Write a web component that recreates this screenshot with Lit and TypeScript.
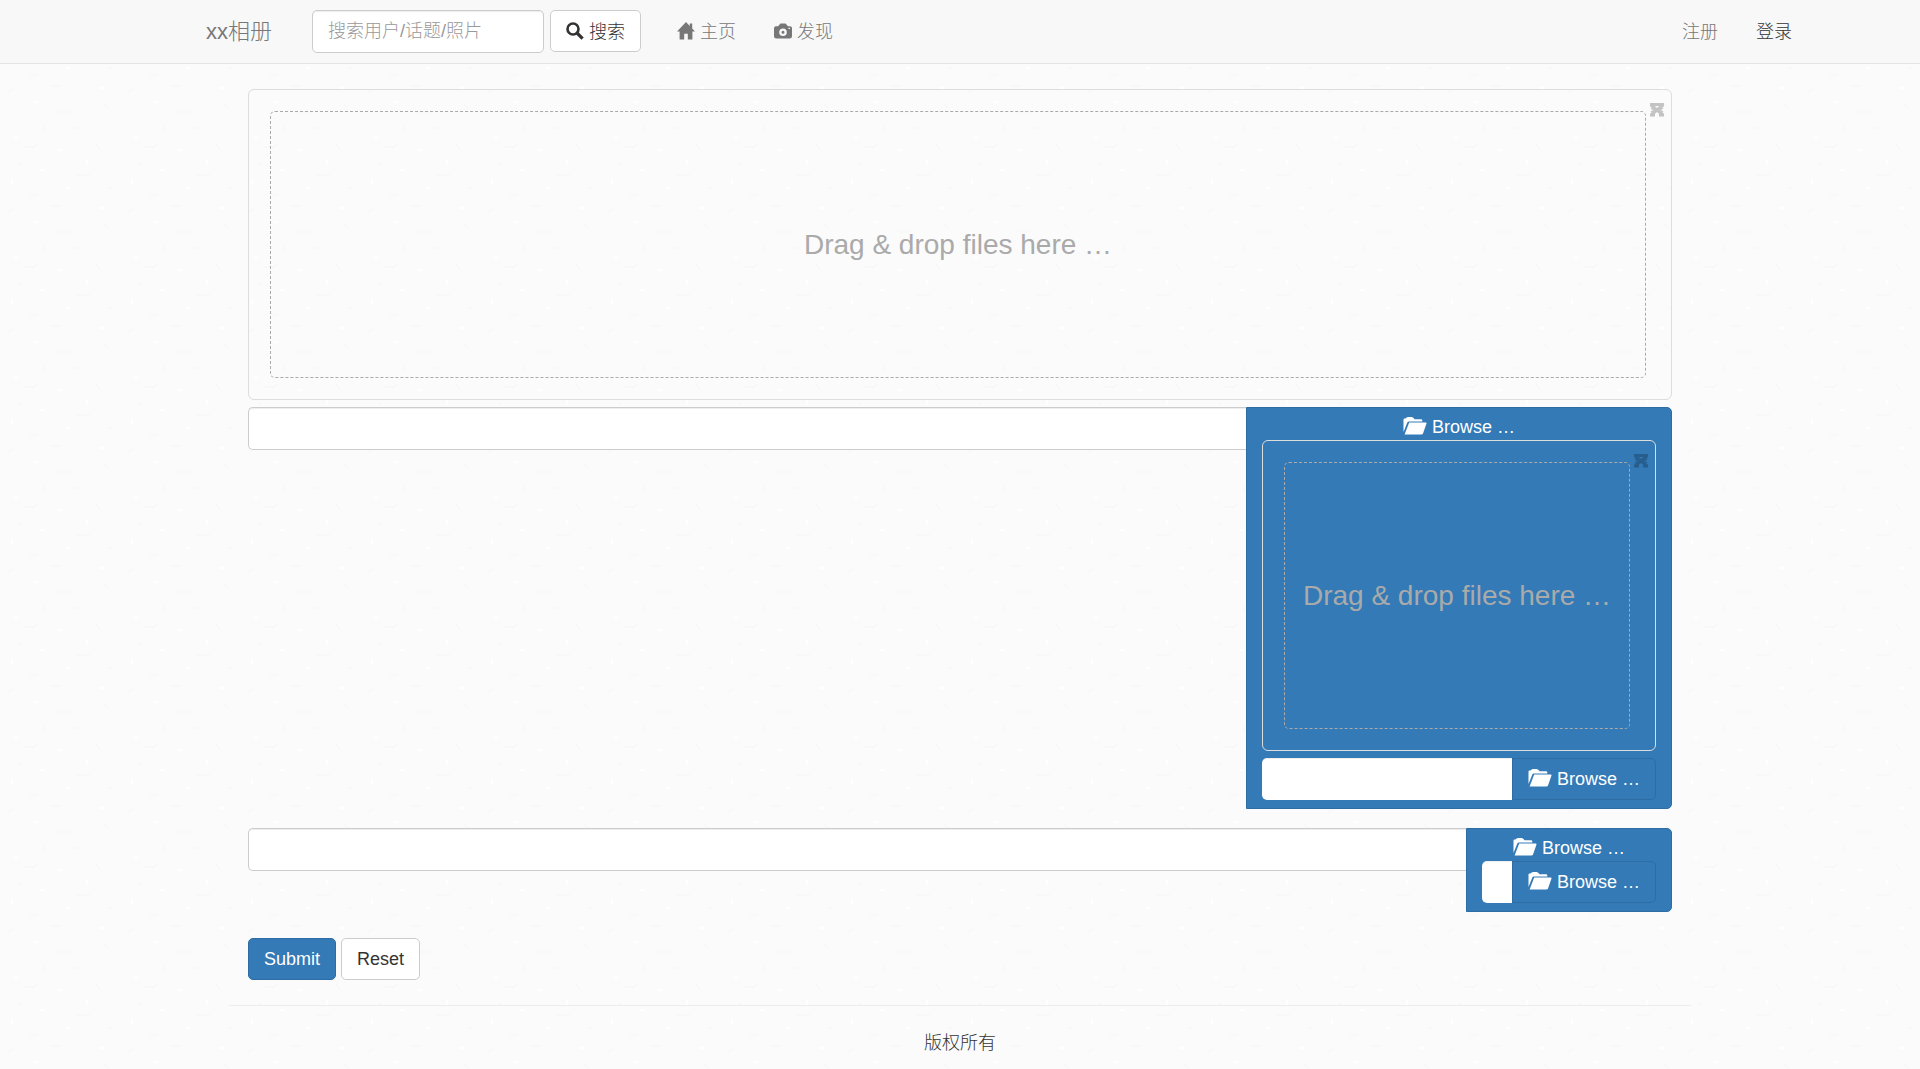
import { LitElement, html, css, svg } from "lit";
import { customElement } from "lit/decorators.js";

const paths: Record<string, [string, unknown]> = {
  search: ["0 0 18 18", svg`<circle cx="7" cy="7" r="5.5" fill="none" stroke="currentColor" stroke-width="2.6"/><path d="M11 11l5.6 5.6" stroke="currentColor" stroke-width="3.2"/>`],
  home: ["0 0 18 18", svg`<path d="M9 0L0 9.400h2.600V17.500h4.600V11.800h3.600v5.700h4.600V9.400h2.600L15.200 6.400V1.400h-2.400v2.500z"/>`],
  camera: ["0 0 18 18", svg`<path fill-rule="evenodd" d="M6.500 1.400h5l2.500 2.800H16Q18 4.200 18 6v8.200Q18 16.500 15.700 16.500H2.300Q0 16.500 0 14.200V6.200Q0 4.200 2 4.200h2zM9 6.400a3.800 3.800 0 1 0 0 7.600A3.800 3.800 0 0 0 9 6.400zM9 8.700a1.500 1.500 0 1 1 0 3a1.500 1.500 0 0 1 0-3zM14.500 5.800v1.200h1.500V5.800z"/>`],
  folder: ["0 0 24 18", svg`<path d="M.5 15V2.500Q.5 1.500 1.500 1.500h1Q3.500 0 5 0h3.500Q10 0 11 1.500l.5.700h6.500q1.300 0 1.300 1.300v.9H6Q4.800 4.400 4.300 5.600z"/><path d="M6.200 5.400H22.600q1.200 0 .9 1.200L20.200 16q-.4 1.500-2 1.500H1.600z"/>`],
};
const icon = (name: string) => html`<svg class="icon ${name}" viewBox=${paths[name][0]} fill="currentColor" aria-hidden="true">${paths[name][1]}</svg>`;

@customElement("app-root")
export class AppRoot extends LitElement {
  static styles = css`
    :host {
      display: block;
      position: relative;
      min-height: 100vh;
      background: #fbfbfb;
      color: #333;
      font: 18px/25px "Liberation Sans", "Noto Sans CJK SC", sans-serif;
      font-weight: 300;
    }
    * { box-sizing: border-box; }
    .texture { position: absolute; inset: 0; width: 100%; height: 100%; }
    .icon { width: 18px; height: 18px; margin-bottom: 3px; flex: none; }
    .icon.folder { width: 24px; }
    .navbar {
      position: relative;
      display: flex;
      align-items: center;
      height: 64px;
      padding: 0 128px 0 206px;
      background: #f8f8f8;
      border-bottom: 1px solid #e4e4e4;
      color: #777;
    }
    a { color: inherit; text-decoration: none; display: flex; align-items: center; gap: 5px; }
    .brand { font-size: 22px; margin-right: 40px; }
    .search { display: flex; align-items: flex-start; gap: 6px; }
    .field {
      min-width: 0;
      height: 43px;
      padding: 8px 15px;
      border: 1px solid #ccc;
      border-radius: 5px;
      background: #fff;
      box-shadow: inset 0 1px 1px rgba(0, 0, 0, 0.075);
      font: inherit;
      color: #555;
      outline: 0;
    }
    .field::placeholder { color: #999; opacity: 1; }
    .search .field { width: 232px; }
    .button {
      display: flex;
      align-items: center;
      justify-content: center;
      gap: 5px;
      height: 42px;
      padding: 0 15px;
      border: 1px solid #ccc;
      border-radius: 5px;
      background: #fff;
      font: inherit;
      color: #333;
      cursor: pointer;
    }
    .search .button { padding-top: 2px; }
    .links, .account { display: flex; gap: 38px; padding-top: 2px; }
    .links { margin-left: 36px; }
    .account { margin-left: auto; }
    .current { color: #333; }
    .page { position: relative; max-width: 1462px; margin: 0 auto; }
    form { display: flex; flex-direction: column; padding: 25px 19px; }
    .preview {
      position: relative;
      padding: 21px 25px 21px 21px;
      border: 1px solid #ddd;
      border-radius: 6px;
      margin-bottom: 7px;
    }
    .zone {
      display: flex;
      align-items: center;
      justify-content: center;
      height: 267px;
      border: 1px dashed #aaa;
      border-radius: 5px;
      color: #aaa;
      font-size: 28px;
      line-height: 40px;
      white-space: nowrap;
    }
    .close {
      position: absolute;
      top: 12px;
      right: 6px;
      width: 16px;
      height: 16px;
      padding: 0;
      border: 0;
      background: none;
      color: #000;
      opacity: 0.22;
      cursor: pointer;
    }
    .close svg { display: block; width: 16px; height: 16px; }
    .group { display: flex; align-items: flex-start; }
    .group .field { flex: 1 1 0; width: 0; border-right: 0; border-radius: 5px 0 0 5px; }
    .upload {
      padding: 7px 15px 8px;
      background: #337ab7;
      border: 1px solid #2e6da4;
      border-radius: 0 5px 5px 0;
      color: #fff;
    }
    .upload.wide { flex: 0 0 426px; }
    .upload.narrow { flex: 0 0 206px; }
    .first { margin-bottom: 19px; }
    .second { margin-bottom: 26px; }
    .browse { position: relative; display: flex; align-items: center; justify-content: center; gap: 5px; cursor: pointer; }
    .upload .group .browse {
      height: 42px;
      padding: 0 15px;
      border: 1px solid #2e6da4;
      border-radius: 0 5px 5px 0;
    }
    .upload .field { border: 0; height: 42px; padding: 0 8px; }
    .hidden { position: absolute; width: 1px; height: 1px; opacity: 0; overflow: hidden; }
    .actions { display: flex; gap: 5px; }
    .primary { background: #337ab7; border-color: #2e6da4; color: #fff; }
    footer { border-top: 1px solid #eee; padding: 25px 0; text-align: center; }
  `;

  private preview() {
    return html`<div class="preview">
      <button class="close" type="button" aria-label="Close">
        <svg viewBox="0 0 16 16" fill="none" stroke="currentColor"><path d="M1 2.500h14M1 13h5M10 13h5M2 3l12 10M14 3L2 13" stroke-width="3"/><path d="M2 6l3 2-3 2M14 6l-3 2 3 2" stroke-width="1.500"/></svg>
      </button>
      <div class="zone">Drag &amp; drop files here …</div>
    </div>`;
  }

  private browse() {
    return html`<label class="browse">${icon("folder")}<span>Browse …</span><input class="hidden" type="file" multiple></label>`;
  }

  private picker(size: string, row: string, withPreview: boolean) {
    return html`<div class="group ${row}">
      <input class="field" type="text" readonly aria-label="File name">
      <div class="upload ${size}">
        ${this.browse()}
        ${withPreview ? this.preview() : ""}
        <div class="group"><input class="field" type="text" readonly aria-label="File name">${this.browse()}</div>
      </div>
    </div>`;
  }

  render() {
    return html`
      <svg class="texture" aria-hidden="true">
        <defs><pattern id="paper" width="120" height="120" patternUnits="userSpaceOnUse">
          <path d="M24 27h10l4-3M18 44h3M96 24l4 6M52 86h8M72 8h6M8 92l6-3M76 55h14M30 75h8M104 104l4 4M60 112h8M108 68h5M44 6v5" stroke="#f5f5f5" fill="none"/>
          <path d="M14 18h4M40 50h4M87 40v5M66 68h4M12 60v4M100 88h4M34 102h4M58 30h4" stroke="#fff" stroke-width="2" fill="none"/>
        </pattern></defs>
        <rect width="100%" height="100%" fill="url(#paper)"/>
      </svg>
      <nav class="navbar">
        <a class="brand" href="#">xx相册</a>
        <div class="search" role="search">
          <input class="field" type="text" placeholder="搜索用户/话题/照片" aria-label="搜索用户/话题/照片">
          <button class="button" type="button">${icon("search")}搜索</button>
        </div>
        <div class="links">
          <a href="#">${icon("home")}主页</a>
          <a href="#">${icon("camera")}发现</a>
        </div>
        <div class="account"><a href="#">注册</a><a class="current" href="#">登录</a></div>
      </nav>
      <main class="page">
        <form>
          ${this.preview()}
          ${this.picker("wide", "first", true)}
          ${this.picker("narrow", "second", false)}
          <div class="actions">
            <button class="button primary" type="submit">Submit</button>
            <button class="button" type="reset">Reset</button>
          </div>
        </form>
        <footer>版权所有</footer>
      </main>`;
  }
}
